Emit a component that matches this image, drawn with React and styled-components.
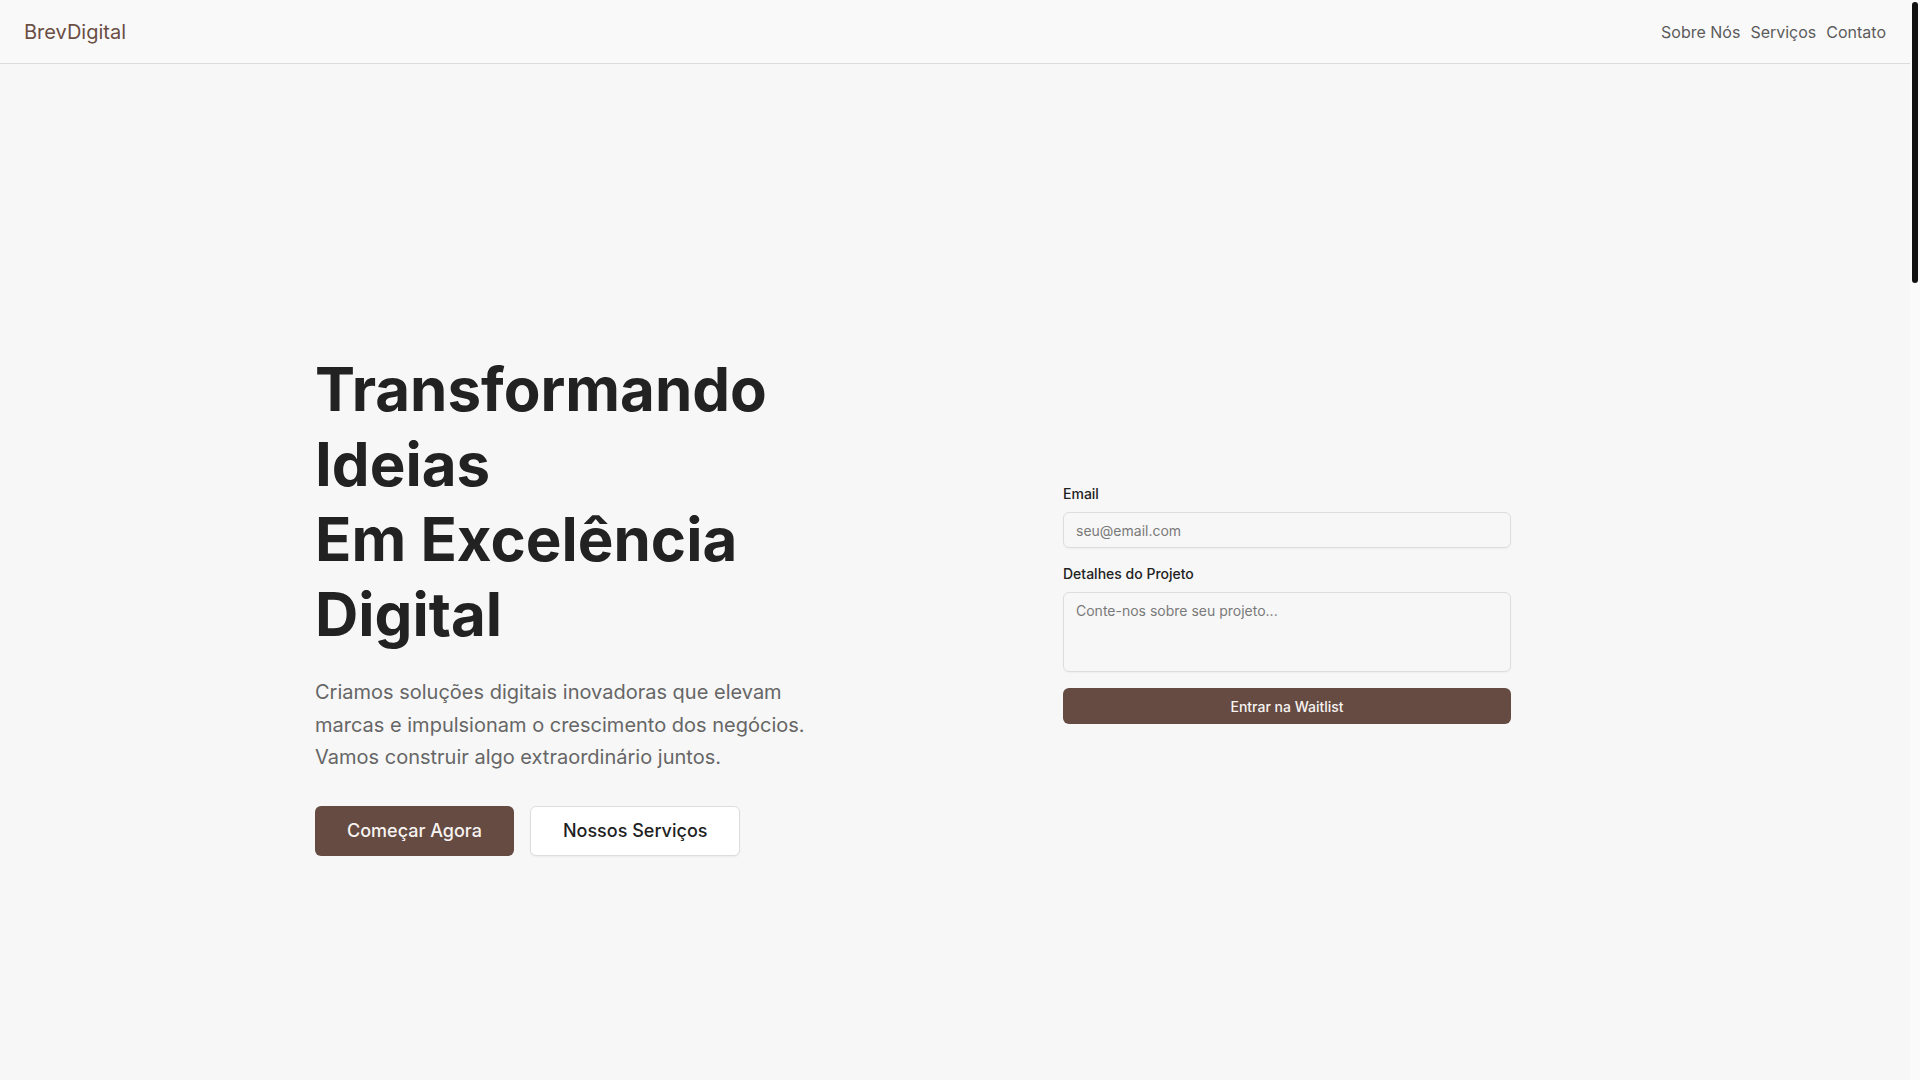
import React from 'react';
import styled, { createGlobalStyle } from 'styled-components';

const GlobalStyle = createGlobalStyle`
  * {
    box-sizing: border-box;
  }
  html, body {
    margin: 0;
    height: 100%;
    overflow: hidden;
    background: #f7f7f7;
  }
  body {
    color: #222222;
    font-family: Inter, 'Liberation Sans', sans-serif;
    -webkit-font-smoothing: antialiased;
  }
`;

const Shell = styled.div`
  height: 100vh;
  display: flex;
`;

const Page = styled.div`
  flex: 1;
  min-width: 0;
  overflow: hidden;
  background: #f7f7f7;
`;

/* page scrollbar as shown in the screenshot */
const Rail = styled.div`
  width: 10px;
  flex-shrink: 0;
  background: #fafafa;
  padding: 2px 2px 0;
`;

const Thumb = styled.div`
  height: 281px;
  border-radius: 3px;
  background: #111111;
`;

const Header = styled.header`
  height: 64px;
  display: flex;
  align-items: center;
  justify-content: space-between;
  padding: 0 24px;
  background: #f9f9f9;
  border-bottom: 1px solid #dcdcdc;
`;

const Logo = styled.a`
  font-size: 20px;
  color: #6b4e44;
  text-decoration: none;
`;

const Nav = styled.nav`
  display: flex;
  align-items: center;
  gap: 10px;
`;

const NavLink = styled.a`
  font-size: 16px;
  color: #5c5c5c;
  text-decoration: none;
`;

const Hero = styled.section`
  min-height: 1080px;
  display: flex;
  align-items: center;
  justify-content: center;
`;

const Container = styled.div`
  width: 1280px;
  display: grid;
  grid-template-columns: 1fr 1fr;
  gap: 48px;
  align-items: center;
`;

const Intro = styled.div`
  display: flex;
  flex-direction: column;
`;

const Title = styled.h1`
  margin: 0 0 24px;
  font-size: 60px;
  line-height: 75px;
  font-weight: 700;
  color: #222222;
`;

const Lead = styled.p`
  margin: 0 0 32px;
  max-width: 512px;
  font-size: 20px;
  line-height: 32.5px;
  color: #666666;
`;

const Actions = styled.div`
  display: flex;
  gap: 16px;
`;

const Button = styled.button`
  font-family: inherit;
  font-size: 18px;
  line-height: 28px;
  font-weight: 500;
  padding: 10px 32px;
  border-radius: 6px;
  cursor: pointer;
  border: ${(p) => (p.$outline ? '1px solid #dedede' : 'none')};
  background: ${(p) => (p.$outline ? '#ffffff' : '#654b42')};
  color: ${(p) => (p.$outline ? '#1f1f1f' : '#f7f3f1')};
  box-shadow: ${(p) => (p.$outline ? '0 1px 2px rgba(0,0,0,0.05)' : 'none')};
`;

const FormWrap = styled.div`
  display: flex;
  justify-content: center;
`;

const Form = styled.form`
  width: 448px;
  display: flex;
  flex-direction: column;
  gap: 16px;
`;

const Field = styled.div`
  display: flex;
  flex-direction: column;
  gap: 8px;
`;

const Label = styled.label`
  font-size: 14px;
  line-height: 20px;
  font-weight: 500;
  color: #222222;
`;

const Input = styled.input`
  height: 36px;
  padding: 0 12px;
  font-family: inherit;
  font-size: 14px;
  color: #222;
  background: transparent;
  border: 1px solid #dddddd;
  border-radius: 6px;
  box-shadow: 0 1px 2px rgba(0, 0, 0, 0.04);
  &::placeholder {
    color: #7a7a7a;
  }
`;

const TextArea = styled.textarea`
  height: 80px;
  padding: 8px 12px;
  font-family: inherit;
  font-size: 14px;
  line-height: 20px;
  color: #222;
  background: transparent;
  border: 1px solid #dddddd;
  border-radius: 6px;
  resize: none;
  box-shadow: 0 1px 2px rgba(0, 0, 0, 0.04);
  &::placeholder {
    color: #7a7a7a;
  }
`;

const Submit = styled.button`
  height: 36px;
  border: none;
  border-radius: 6px;
  background: #654b42;
  color: #f7f3f1;
  font-family: inherit;
  font-size: 14px;
  font-weight: 500;
  cursor: pointer;
`;

export default function App() {
  return (
    <>
      <GlobalStyle />
      <Shell>
        <Page>
          <Header>
            <Logo href="#">BrevDigital</Logo>
            <Nav>
              <NavLink href="#sobre">Sobre Nós</NavLink>
              <NavLink href="#servicos">Serviços</NavLink>
              <NavLink href="#contato">Contato</NavLink>
            </Nav>
          </Header>

          <Hero>
            <Container>
              <Intro>
                <Title>
                  Transformando Ideias
                  <br />
                  Em Excelência Digital
                </Title>
                <Lead>
                  Criamos soluções digitais inovadoras que elevam marcas e impulsionam o
                  crescimento dos negócios. Vamos construir algo extraordinário juntos.
                </Lead>
                <Actions>
                  <Button type="button">Começar Agora</Button>
                  <Button type="button" $outline>
                    Nossos Serviços
                  </Button>
                </Actions>
              </Intro>

              <FormWrap>
                <Form onSubmit={(e) => e.preventDefault()}>
                  <Field>
                    <Label htmlFor="email">Email</Label>
                    <Input id="email" type="email" placeholder="seu@email.com" />
                  </Field>
                  <Field>
                    <Label htmlFor="details">Detalhes do Projeto</Label>
                    <TextArea id="details" placeholder="Conte-nos sobre seu projeto..." />
                  </Field>
                  <Submit type="submit">Entrar na Waitlist</Submit>
                </Form>
              </FormWrap>
            </Container>
          </Hero>
        </Page>
        <Rail>
          <Thumb />
        </Rail>
      </Shell>
    </>
  );
}
